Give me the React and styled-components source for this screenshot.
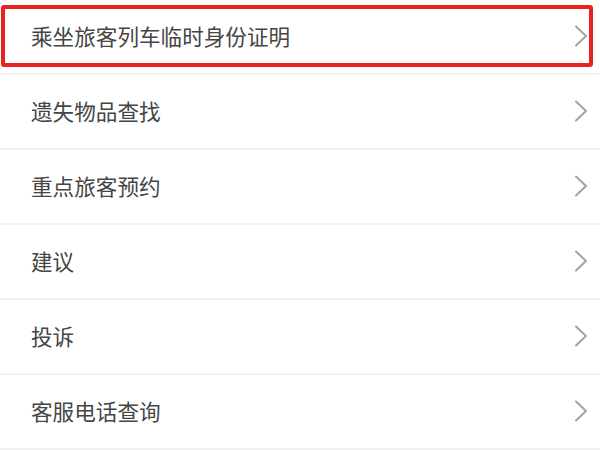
import React from "react";
import styled, { createGlobalStyle } from "styled-components";

const Global = createGlobalStyle`
  html, body { margin: 0; padding: 0; background: #ffffff; }
  body { font-family: "Noto Sans CJK SC", "Noto Sans", sans-serif; }
`;

const List = styled.ul`
  list-style: none;
  margin: 0;
  padding: 0;
  width: 600px;
  background: #ffffff;
`;

const Row = styled.li`
  position: relative;
  box-sizing: border-box;
  height: 75px;
  padding: 0 12px 2px 31px;
  display: flex;
  align-items: center;
  justify-content: space-between;
  border-bottom: 2px solid #f1f1f1;

  ${(p) =>
    p.$highlight &&
    `
    &::after {
      content: "";
      position: absolute;
      left: 1px;
      top: 5px;
      width: 592px;
      height: 62px;
      box-sizing: border-box;
      border: 4px solid #e8231f;
      border-radius: 3px;
      pointer-events: none;
    }
  `}
`;

const Label = styled.span`
  font-size: 21.6px;
  color: #454545;
  line-height: 1;
  letter-spacing: 0;
`;

const Chevron = () => (
  <svg width="14" height="22" viewBox="0 0 14 22" fill="none">
    <path d="M2 1.5 L12 11 L2 20.5" stroke="#a3a3a3" strokeWidth="2" strokeLinecap="round" strokeLinejoin="round" />
  </svg>
);

const items = [
  "乘坐旅客列车临时身份证明",
  "遗失物品查找",
  "重点旅客预约",
  "建议",
  "投诉",
  "客服电话查询",
];

export default function App() {
  return (
    <>
      <Global />
      <List>
        {items.map((t, i) => (
          <Row key={t} $highlight={i === 0}>
            <Label>{t}</Label>
            <Chevron />
          </Row>
        ))}
      </List>
    </>
  );
}
